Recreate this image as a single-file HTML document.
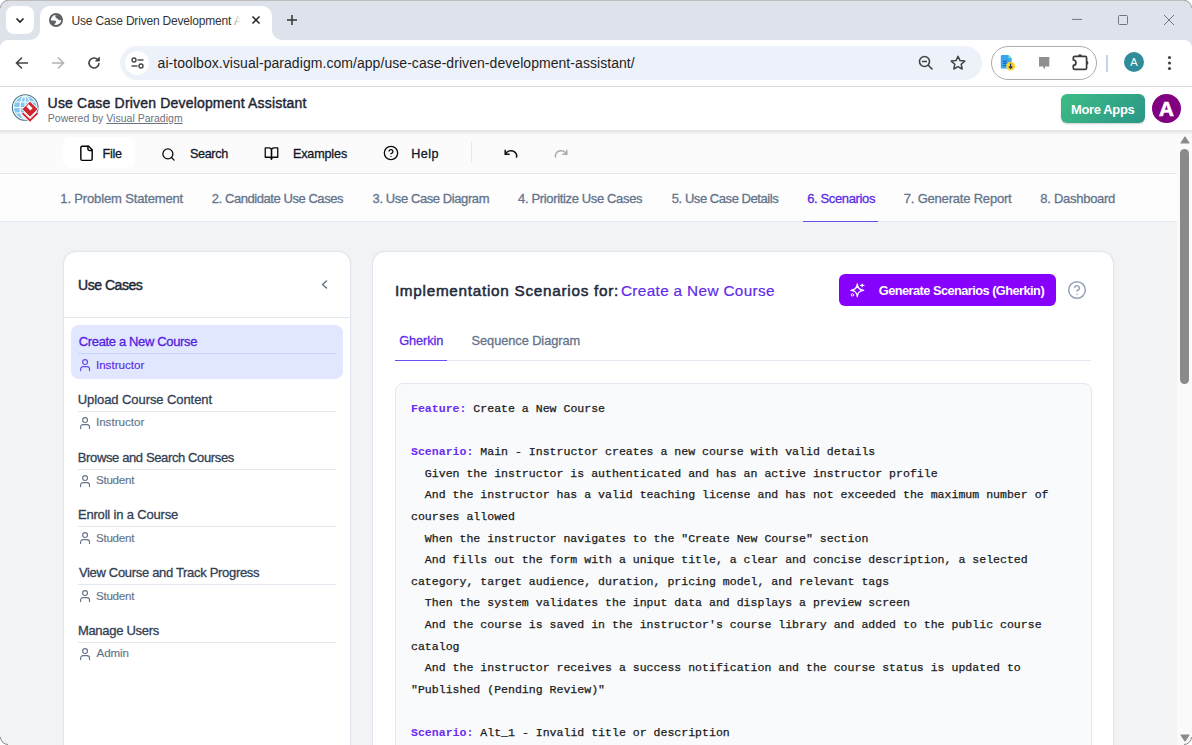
<!DOCTYPE html>
<html><head><meta charset="utf-8">
<style>
*{box-sizing:border-box;margin:0;padding:0}
html,body{width:1192px;height:745px;overflow:hidden;background:#fff}
body{position:relative;font-family:"Liberation Sans",sans-serif;color:#1f2937}
.abs{position:absolute}
svg{position:absolute;overflow:visible}
.t{position:absolute;white-space:pre;line-height:1;font-family:"Liberation Sans",sans-serif}
pre{position:absolute;font-family:"Liberation Mono",monospace;font-size:11.55px;line-height:21.6px;color:#1a1a1a;white-space:pre;-webkit-text-stroke:0.25px #1a1a1a}
.kw{color:#6b2cf5;font-weight:bold;-webkit-text-stroke:0.05px #6b2cf5}
</style></head><body>
<!-- ============ BROWSER CHROME ============ -->
<div class="abs" style="left:0;top:0;width:1192px;height:40px;background:#dee3eb;border-top:1px solid #bdbdbd"></div>
<!-- active tab -->
<div class="abs" style="left:40px;top:6px;width:232px;height:36px;background:#fff;border-radius:10px 10px 0 0"></div>
<div class="abs" style="left:30px;top:30px;width:10px;height:10px;background:#fff"></div>
<div class="abs" style="left:30px;top:30px;width:10px;height:10px;background:#dee3eb;border-radius:0 0 10px 0"></div>
<div class="abs" style="left:272px;top:30px;width:10px;height:10px;background:#fff"></div>
<div class="abs" style="left:272px;top:30px;width:10px;height:10px;background:#dee3eb;border-radius:0 0 0 10px"></div>
<div class="abs" style="left:6px;top:6px;width:28px;height:28px;background:#fff;border-radius:8px"></div>
<svg style="left:14px;top:14px" width="12" height="12" viewBox="0 0 12 12"><path d="M2.5 4.5 6 8 9.5 4.5" fill="none" stroke="#1f1f1f" stroke-width="1.6"/></svg>
<svg style="left:49px;top:12.8px" width="14" height="14" viewBox="0 0 14 14"><circle cx="7" cy="7" r="6.05" fill="#fff" stroke="#5f6368" stroke-width="1.9"/><path d="M6.3 2.2C5.8 3.6 6.9 5 8 5.5 9 6 9.5 7 10.6 7.2 11.9 7.3 12.8 6.6 13 5.6L11.2 1.8z" fill="#5f6368"/><path d="M1 7.4H5.3C6.8 7.4 7.4 8.5 6.9 9.5 6.5 10.3 5.6 10.6 5.3 11.6L5.1 12.8 2.2 11.2z" fill="#5f6368"/></svg>
<div class="t" style="left:234px;top:15.2px;font-size:12px;color:#555">A</div>
<div class="abs" style="left:233px;top:8px;width:14px;height:26px;background:linear-gradient(90deg,rgba(255,255,255,.3),#fff 55%)"></div>
<svg style="left:252px;top:16px" width="8" height="8" viewBox="0 0 8 8"><path d="M.5.5l7 7M7.5.5l-7 7" stroke="#1f1f1f" stroke-width="1.5"/></svg>
<svg style="left:287px;top:15px" width="10" height="10" viewBox="0 0 10 10"><path d="M5 0v10M0 5h10" stroke="#333" stroke-width="1.5"/></svg>
<!-- window controls -->
<svg style="left:1072px;top:14px" width="10" height="10" viewBox="0 0 10 10"><path d="M0 5.4h10" stroke="#72767c" stroke-width="1"/></svg>
<svg style="left:1118px;top:15px" width="10" height="10" viewBox="0 0 10 10"><rect x=".5" y=".5" width="9" height="9" rx="1" fill="none" stroke="#72767c" stroke-width="1"/></svg>
<svg style="left:1164px;top:15px" width="10" height="10" viewBox="0 0 10 10"><path d="M0 0l10 10M10 0L0 10" stroke="#72767c" stroke-width="1"/></svg>

<div class="abs" style="left:0;top:40px;width:1192px;height:47px;background:#fff;border-bottom:1px solid #d8dadd"></div>
<svg style="left:0;top:40px" width="8" height="8" viewBox="0 0 8 8"><path d="M0 0H8A8 8 0 0 0 0 8z" fill="#dee3eb"/></svg>
<svg style="left:1184px;top:40px" width="8" height="8" viewBox="0 0 8 8"><path d="M8 0H0A8 8 0 0 1 8 8z" fill="#dee3eb"/></svg>
<svg style="left:15px;top:56px" width="14" height="14" viewBox="0 0 14 14"><path d="M13 7H2M7 1.5 1.5 7 7 12.5" fill="none" stroke="#444" stroke-width="1.6"/></svg>
<svg style="left:51px;top:56px" width="14" height="14" viewBox="0 0 14 14"><path d="M1 7h11M7 1.5 12.5 7 7 12.5" fill="none" stroke="#b0b3b8" stroke-width="1.6"/></svg>
<svg style="left:87px;top:56px" width="14" height="14" viewBox="0 0 14 14"><path d="M12 7a5 5 0 1 1-1.5-3.6" fill="none" stroke="#444" stroke-width="1.6"/><path d="M12.3 1v4h-4" fill="#444" stroke="#444" stroke-width="1"/></svg>
<div class="abs" style="left:120px;top:46px;width:862px;height:34px;border-radius:17px;background:#edf2fa"></div>
<div class="abs" style="left:125px;top:51px;width:24px;height:24px;border-radius:12px;background:#fff"></div>
<svg style="left:131px;top:57px" width="13" height="12" viewBox="0 0 13 12"><circle cx="3" cy="3" r="2" fill="none" stroke="#444" stroke-width="1.4"/><path d="M6.5 3h6" stroke="#444" stroke-width="1.4"/><circle cx="10" cy="9" r="2" fill="none" stroke="#444" stroke-width="1.4"/><path d="M0.5 9h6" stroke="#444" stroke-width="1.4"/></svg>
<svg style="left:918px;top:55px" width="16" height="16" viewBox="0 0 16 16"><circle cx="6.5" cy="6.5" r="5" fill="none" stroke="#444" stroke-width="1.6"/><path d="M4 6.5h5M10 10l4.5 4.5" stroke="#444" stroke-width="1.6"/></svg>
<svg style="left:950px;top:55px" width="16" height="16" viewBox="0 0 16 16"><path d="M8 1.2l2 4.4 4.8.5-3.6 3.2 1 4.7L8 11.6 3.8 14l1-4.7L1.2 6.1 6 5.6z" fill="none" stroke="#444" stroke-width="1.5" stroke-linejoin="round"/></svg>
<div class="abs" style="left:991px;top:46px;width:106px;height:34px;border-radius:17px;border:1px solid #a8abb0"></div>
<svg style="left:996px;top:50px" width="60" height="26" viewBox="0 0 60 26"><path d="M6 5H12.4L15.6 8.2V17.4a1.2 1.2 0 0 1-1.2 1.2H6a1.2 1.2 0 0 1-1.2-1.2V6.2A1.2 1.2 0 0 1 6 5z" fill="#3aa4ee"/><path d="M12.4 5V8.2H15.6z" fill="#6de3cf"/><path d="M7 11.3h3.8M7 13.4h3.8M7 15.5h3.8" stroke="#1f5a9e" stroke-width=".9"/><circle cx="14.6" cy="16.1" r="4.4" fill="#f8d41e"/><path d="M14.6 13.4V18.2M12.9 16.5l1.7 1.8 1.7-1.8" fill="none" stroke="#1d2a5a" stroke-width="1.1"/><path d="M43 7H53.3V16.6H49.3L48.2 19.6 47.1 16.6H43z" fill="#8f8f8f"/></svg>

<svg style="left:1066px;top:50px" width="30" height="26" viewBox="0 0 30 26"><path d="M8.8 6.3H19.1a1.5 1.5 0 0 1 1.5 1.5V17.9a1.5 1.5 0 0 1-1.5 1.5H8.8a1.5 1.5 0 0 1-1.5-1.5V15.3a2.65 2.65 0 0 0 0-5.3V7.8a1.5 1.5 0 0 1 1.5-1.5z" fill="none" stroke="#3c3c3c" stroke-width="1.7" stroke-linejoin="round"/><path d="M12 6.3a2 2 0 0 1 4 0z" fill="#3c3c3c"/><path d="M20.6 11.1a1.8 1.8 0 0 1 0 3.6z" fill="#3c3c3c"/></svg>
<div class="abs" style="left:1106px;top:55px;width:2px;height:17px;background:#c6d4ef"></div>
<div class="abs" style="left:1124px;top:52px;width:20px;height:20px;border-radius:10px;background:#2e8d99;color:#fff;font-size:11px;text-align:center;line-height:20px">A</div>
<svg style="left:1167px;top:55px" width="5" height="16" viewBox="0 0 5 16"><circle cx="2.5" cy="2.5" r="1.6" fill="#444"/><circle cx="2.5" cy="8" r="1.6" fill="#444"/><circle cx="2.5" cy="13.5" r="1.6" fill="#444"/></svg>

<!-- ============ CONTENT BG ============ -->
<div class="abs" style="left:0;top:130px;width:1177px;height:615px;background:#f2f3f5"></div>
<div class="abs" style="left:0;top:130px;width:1177px;height:44px;background:#fbfbfc;border-bottom:1px solid #e2e8f0"></div>
<div class="abs" style="left:0;top:174px;width:1177px;height:48px;background:#fdfdfe;border-bottom:1px solid #e2e8f0"></div>

<div class="abs" style="left:1177px;top:130px;width:15px;height:615px;background:#fafafa"></div>
<!-- ============ APP HEADER ============ -->
<div class="abs" style="left:0;top:87px;width:1192px;height:43px;background:#fff"></div>
<div class="abs" style="left:0;top:130px;width:1192px;height:2px;background:#e4e5e8"></div>
<div class="abs" style="left:0;top:132px;width:1192px;height:3px;background:linear-gradient(#ececee,rgba(251,251,252,0))"></div>
<svg style="left:12px;top:94px" width="27" height="27" viewBox="0 0 27 27">
  <circle cx="13.2" cy="13.5" r="12.8" fill="#fff" stroke="#4f7585" stroke-width="1.1"/>
  <circle cx="13.2" cy="13.5" r="11.2" fill="#82c8f0"/>
  <path d="M2 13.5h22.4M3.6 8h19.2M3.6 19h19.2M13.2 2.3v22.4" stroke="#fff" stroke-width="1.1"/>
  <ellipse cx="13.2" cy="13.5" rx="5.2" ry="11.2" fill="none" stroke="#fff" stroke-width="1.1"/>
  <path d="M10.5 19.2l7.5 7.3 7.5-7.3" fill="none" stroke="#fff" stroke-width="3.6"/>
  <path d="M10.5 19.2l7.5 7.3 7.5-7.3" fill="none" stroke="#d0242e" stroke-width="1.8"/>
  <path d="M18 7.2l8 8-8 8-8-8z" fill="#d0242e" stroke="#fff" stroke-width="1"/>
  <path d="M16.6 10.2l4 4-2.3 2.3-4-4z" fill="#fff"/>
</svg>
<div class="abs" style="left:1061px;top:94px;width:84px;height:29px;border-radius:6px;background:linear-gradient(135deg,#3dbd84,#2b9688);box-shadow:0 1px 2px rgba(0,0,0,.2)"></div>
<div class="abs" style="left:1152px;top:94px;width:29px;height:29px;border-radius:15px;background:#800080;color:#fff;font-weight:bold;font-size:20.5px;text-align:center;line-height:29px;-webkit-text-stroke:0.7px #fff">A</div>

<!-- ============ MENUBAR ============ -->
<div class="abs" style="left:63px;top:137px;width:72px;height:31px;border-radius:7px;background:#fff"></div>
<svg style="left:77.5px;top:143.5px" width="17" height="18.5" viewBox="0 0 24 24" fill="none" stroke="#000" stroke-width="2" stroke-linecap="round" stroke-linejoin="round"><path d="M15 2H6a2 2 0 0 0-2 2v16a2 2 0 0 0 2 2h12a2 2 0 0 0 2-2V7Z"/><path d="M14 2v4a2 2 0 0 0 2 2h4"/></svg>
<svg style="left:161px;top:146.8px" width="15" height="15" viewBox="0 0 24 24" fill="none" stroke="#0b0b0b" stroke-width="2.1" stroke-linecap="round"><circle cx="11" cy="11" r="8"/><path d="m21 21-4.3-4.3"/></svg>
<svg style="left:264px;top:146px" width="15" height="15" viewBox="0 0 24 24" fill="none" stroke="#0b0b0b" stroke-width="2.1" stroke-linejoin="round"><path d="M2 3h6a4 4 0 0 1 4 4v14a3 3 0 0 0-3-3H2z"/><path d="M22 3h-6a4 4 0 0 0-4 4v14a3 3 0 0 1 3-3h7z"/></svg>
<svg style="left:382.5px;top:145.2px" width="16" height="16" viewBox="0 0 24 24" fill="none" stroke="#0b0b0b" stroke-width="2" stroke-linecap="round"><circle cx="12" cy="12" r="10"/><path d="M9.09 9a3 3 0 0 1 5.83 1c0 2-3 3-3 3"/><path d="M12 17h.01"/></svg>
<div class="abs" style="left:471px;top:141px;width:1px;height:22px;background:#e2e8f0"></div>
<svg style="left:504px;top:148.5px" width="13" height="9" viewBox="0 0 13 9" fill="none" stroke="#111" stroke-width="1.5"><path d="M1.2 .8v4.5h4.5"/><path d="M1.6 5A5.6 5 0 0 1 12.3 8.6"/></svg>
<svg style="left:554.5px;top:148.5px" width="13" height="9" viewBox="0 0 13 9" fill="none" stroke="#a8a8a8" stroke-width="1.4"><path d="M11.8 .8v4.5H7.3"/><path d="M11.4 5A5.6 5 0 0 0 .7 8.6"/></svg>
<!-- steps underline -->
<div class="abs" style="left:803px;top:220.5px;width:75px;height:1.5px;background:#6451f2"></div>

<!-- ============ LEFT CARD ============ -->
<div class="abs" style="left:63px;top:251px;width:288px;height:620px;background:#fff;border:1px solid #e1e6ef;border-radius:13px;box-shadow:0 0 2px rgba(0,0,0,.07)"></div>
<svg style="left:321px;top:280px" width="8" height="10" viewBox="0 0 8 10" fill="none" stroke="#64748b" stroke-width="1.5" stroke-linecap="round" stroke-linejoin="round"><path d="M5.5 1 1.5 4.5l4 3.5"/></svg>
<div class="abs" style="left:64px;top:317px;width:286px;height:1px;background:#e2e8f0"></div>
<div class="abs" style="left:71px;top:325px;width:272px;height:54px;border-radius:8px;background:#e0e7ff"></div>
<div class="abs" style="left:78px;top:353px;width:258px;height:1px;background:#c7d2fe"></div>
<svg style="left:76px;top:357.9px" width="18" height="16" viewBox="0 0 18 16" fill="none" stroke="#6447f0" stroke-width="1.15" stroke-linecap="round"><circle cx="9.06" cy="4.0" r="2.45"/><path d="M4.6 12.6V11.1A2.5 2.5 0 0 1 7.1 8.6H11A2.5 2.5 0 0 1 13.5 11.1V12.6"/></svg>
<div class="abs" style="left:78px;top:411px;width:258px;height:1px;background:#e2e8f0"></div>
<svg style="left:76px;top:415.9px" width="18" height="16" viewBox="0 0 18 16" fill="none" stroke="#64748b" stroke-width="1.15" stroke-linecap="round"><circle cx="9.06" cy="4.0" r="2.45"/><path d="M4.6 12.6V11.1A2.5 2.5 0 0 1 7.1 8.6H11A2.5 2.5 0 0 1 13.5 11.1V12.6"/></svg>
<div class="abs" style="left:78px;top:469px;width:258px;height:1px;background:#e2e8f0"></div>
<svg style="left:76px;top:473.7px" width="18" height="16" viewBox="0 0 18 16" fill="none" stroke="#64748b" stroke-width="1.15" stroke-linecap="round"><circle cx="9.06" cy="4.0" r="2.45"/><path d="M4.6 12.6V11.1A2.5 2.5 0 0 1 7.1 8.6H11A2.5 2.5 0 0 1 13.5 11.1V12.6"/></svg>
<div class="abs" style="left:78px;top:526px;width:258px;height:1px;background:#e2e8f0"></div>
<svg style="left:76px;top:530.8px" width="18" height="16" viewBox="0 0 18 16" fill="none" stroke="#64748b" stroke-width="1.15" stroke-linecap="round"><circle cx="9.06" cy="4.0" r="2.45"/><path d="M4.6 12.6V11.1A2.5 2.5 0 0 1 7.1 8.6H11A2.5 2.5 0 0 1 13.5 11.1V12.6"/></svg>
<div class="abs" style="left:78px;top:584px;width:258px;height:1px;background:#e2e8f0"></div>
<svg style="left:76px;top:588.9px" width="18" height="16" viewBox="0 0 18 16" fill="none" stroke="#64748b" stroke-width="1.15" stroke-linecap="round"><circle cx="9.06" cy="4.0" r="2.45"/><path d="M4.6 12.6V11.1A2.5 2.5 0 0 1 7.1 8.6H11A2.5 2.5 0 0 1 13.5 11.1V12.6"/></svg>
<div class="abs" style="left:78px;top:642px;width:258px;height:1px;background:#e2e8f0"></div>
<svg style="left:76px;top:646.7px" width="18" height="16" viewBox="0 0 18 16" fill="none" stroke="#64748b" stroke-width="1.15" stroke-linecap="round"><circle cx="9.06" cy="4.0" r="2.45"/><path d="M4.6 12.6V11.1A2.5 2.5 0 0 1 7.1 8.6H11A2.5 2.5 0 0 1 13.5 11.1V12.6"/></svg>

<!-- ============ RIGHT CARD ============ -->
<div class="abs" style="left:372px;top:251px;width:742px;height:620px;background:#fff;border:1px solid #e1e6ef;border-radius:13px;box-shadow:0 0 2px rgba(0,0,0,.07)"></div>
<div class="abs" style="left:839px;top:274px;width:217px;height:32px;border-radius:6px;background:#8602fc"></div>
<svg style="left:845px;top:278px" width="26" height="24" viewBox="0 0 26 24" fill="none" stroke="#fff" stroke-linecap="round" stroke-linejoin="round"><path d="M12.3 5.9Q12.7 11.9 18.7 12.3 12.7 12.7 12.3 18.6 11.9 12.7 5.9 12.3 11.9 11.9 12.3 5.9z" stroke-width="1.3"/><path d="M15.5 7.4h3.4M17.2 6.1v2.6" stroke-width="1.2"/><circle cx="7.4" cy="16.9" r="1.2" stroke-width="1"/></svg>
<svg style="left:1067px;top:280px" width="20" height="20" viewBox="0 0 24 24" fill="none" stroke="#94a3b8" stroke-width="1.8" stroke-linecap="round"><circle cx="12" cy="12" r="10"/><path d="M9.09 9a3 3 0 0 1 5.83 1c0 2-3 3-3 3"/><path d="M12 17h.01"/></svg>
<div class="abs" style="left:395px;top:360px;width:696px;height:1px;background:#e2e8f0"></div>
<div class="abs" style="left:395px;top:359.6px;width:52px;height:1.6px;background:#6451f2"></div>
<div class="abs" style="left:395px;top:383px;width:697px;height:600px;border:1px solid #e2e8f0;border-radius:8px;background:#f8fafc"></div>
<pre style="left:411px;top:398.1px"><span class="kw">Feature:</span> Create a New Course

<span class="kw">Scenario:</span> Main - Instructor creates a new course with valid details
  Given the instructor is authenticated and has an active instructor profile
  And the instructor has a valid teaching license and has not exceeded the maximum number of
courses allowed
  When the instructor navigates to the "Create New Course" section
  And fills out the form with a unique title, a clear and concise description, a selected
category, target audience, duration, pricing model, and relevant tags
  Then the system validates the input data and displays a preview screen
  And the course is saved in the instructor's course library and added to the public course
catalog
  And the instructor receives a success notification and the course status is updated to
"Published (Pending Review)"

<span class="kw">Scenario:</span> Alt_1 - Invalid title or description
  Given the instructor is authenticated</pre>

<!-- ============ SCROLLBAR ============ -->
<svg style="left:1179.5px;top:135.5px" width="10" height="8" viewBox="0 0 10 8"><path d="M5 1 9 7H1z" fill="#8a8a8a" stroke="#8a8a8a" stroke-width="1.2" stroke-linejoin="round"/></svg>
<div class="abs" style="left:1180px;top:149px;width:9px;height:235px;border-radius:4.5px;background:#8a8a8a"></div>
<svg style="left:1179.5px;top:733.5px" width="10" height="8" viewBox="0 0 10 8"><path d="M1 1H9L5 7z" fill="#8a8a8a" stroke="#8a8a8a" stroke-width="1.2" stroke-linejoin="round"/></svg>

<!-- window corners -->
<svg style="left:0;top:0" width="8" height="8" viewBox="0 0 8 8"><path d="M0 0H8A8 8 0 0 0 0 8z" fill="#fff"/><path d="M8 .5A7.5 7.5 0 0 0 .5 8" fill="none" stroke="#a8a8a8" stroke-width="1"/></svg>
<svg style="left:1184px;top:0" width="8" height="8" viewBox="0 0 8 8"><path d="M8 0H0A8 8 0 0 1 8 8z" fill="#fff"/><path d="M0 .5A7.5 7.5 0 0 1 7.5 8" fill="none" stroke="#a8a8a8" stroke-width="1"/></svg>
<svg style="left:0;top:737px" width="8" height="8" viewBox="0 0 8 8"><path d="M0 8H8A8 8 0 0 1 0 0z" fill="#fff"/><path d="M8 7.5A7.5 7.5 0 0 1 .5 0" fill="none" stroke="#8a8a8a" stroke-width="1"/></svg>
<svg style="left:1184px;top:737px" width="8" height="8" viewBox="0 0 8 8"><path d="M8 8H0A8 8 0 0 0 8 0z" fill="#fff"/><path d="M0 7.5A7.5 7.5 0 0 0 7.5 0" fill="none" stroke="#8a8a8a" stroke-width="1"/></svg>

<div class="t" style="left:71.60px;top:15.24px;font-size:12px;letter-spacing:-0.193px;color:#333;">Use Case Driven Development</div>
<div class="t" style="left:157.60px;top:55.75px;font-size:14px;letter-spacing:0.055px;color:#1f1f1f;">ai-toolbox.visual-paradigm.com/app/use-case-driven-development-assistant/</div>
<div class="t" style="left:47.60px;top:95.95px;font-size:14px;letter-spacing:0.183px;color:#1e2433;-webkit-text-stroke:0.4px currentColor;">Use Case Driven Development Assistant</div>
<div class="t" style="left:47.80px;top:112.71px;font-size:10.5px;letter-spacing:0.008px;color:#6b7280;">Powered by <span style="text-decoration:underline">Visual Paradigm</span></div>
<div class="t" style="left:1071.00px;top:102.89px;font-size:13px;letter-spacing:-0.374px;font-weight:bold;color:#fff;">More Apps</div>
<div class="t" style="left:102.60px;top:147.63px;font-size:12.6px;letter-spacing:-0.334px;color:#111827;-webkit-text-stroke:0.3px currentColor;">File</div>
<div class="t" style="left:189.90px;top:147.63px;font-size:12.6px;letter-spacing:-0.32px;color:#111827;-webkit-text-stroke:0.3px currentColor;">Search</div>
<div class="t" style="left:292.90px;top:147.63px;font-size:12.6px;letter-spacing:-0.143px;color:#111827;-webkit-text-stroke:0.3px currentColor;">Examples</div>
<div class="t" style="left:411.20px;top:147.63px;font-size:12.6px;letter-spacing:0.466px;color:#111827;-webkit-text-stroke:0.3px currentColor;">Help</div>
<div class="t" style="left:60.30px;top:192.49px;font-size:13px;letter-spacing:-0.148px;color:#64748b;-webkit-text-stroke:0.3px currentColor;">1. Problem Statement</div>
<div class="t" style="left:211.80px;top:192.49px;font-size:13px;letter-spacing:-0.438px;color:#64748b;-webkit-text-stroke:0.3px currentColor;">2. Candidate Use Cases</div>
<div class="t" style="left:372.60px;top:192.49px;font-size:13px;letter-spacing:-0.411px;color:#64748b;-webkit-text-stroke:0.3px currentColor;">3. Use Case Diagram</div>
<div class="t" style="left:518.10px;top:192.49px;font-size:13px;letter-spacing:-0.354px;color:#64748b;-webkit-text-stroke:0.3px currentColor;">4. Prioritize Use Cases</div>
<div class="t" style="left:671.80px;top:192.49px;font-size:13px;letter-spacing:-0.444px;color:#64748b;-webkit-text-stroke:0.3px currentColor;">5. Use Case Details</div>
<div class="t" style="left:807.20px;top:192.49px;font-size:13px;letter-spacing:-0.364px;color:#5b2bea;-webkit-text-stroke:0.3px currentColor;">6. Scenarios</div>
<div class="t" style="left:903.80px;top:192.49px;font-size:13px;letter-spacing:-0.2px;color:#64748b;-webkit-text-stroke:0.3px currentColor;">7. Generate Report</div>
<div class="t" style="left:1040.30px;top:192.49px;font-size:13px;letter-spacing:-0.273px;color:#64748b;-webkit-text-stroke:0.3px currentColor;">8. Dashboard</div>
<div class="t" style="left:78.10px;top:278.05px;font-size:14px;letter-spacing:-0.476px;color:#1e293b;-webkit-text-stroke:0.45px currentColor;">Use Cases</div>
<div class="t" style="left:78.80px;top:334.89px;font-size:13px;letter-spacing:-0.355px;color:#5521dd;-webkit-text-stroke:0.3px currentColor;">Create a New Course</div>
<div class="t" style="left:95.90px;top:359.18px;font-size:11.6px;letter-spacing:0.022px;color:#5d2ae8;-webkit-text-stroke:0.15px currentColor;">Instructor</div>
<div class="t" style="left:77.80px;top:392.89px;font-size:13px;letter-spacing:-0.08px;color:#334155;-webkit-text-stroke:0.3px currentColor;">Upload Course Content</div>
<div class="t" style="left:95.90px;top:415.98px;font-size:11.6px;letter-spacing:0.022px;color:#64748b;-webkit-text-stroke:0.15px currentColor;">Instructor</div>
<div class="t" style="left:77.80px;top:450.69px;font-size:13px;letter-spacing:-0.375px;color:#334155;-webkit-text-stroke:0.3px currentColor;">Browse and Search Courses</div>
<div class="t" style="left:95.90px;top:474.08px;font-size:11.6px;letter-spacing:-0.233px;color:#64748b;-webkit-text-stroke:0.15px currentColor;">Student</div>
<div class="t" style="left:77.90px;top:507.79px;font-size:13px;letter-spacing:-0.176px;color:#334155;-webkit-text-stroke:0.3px currentColor;">Enroll in a Course</div>
<div class="t" style="left:95.90px;top:532.28px;font-size:11.6px;letter-spacing:-0.233px;color:#64748b;-webkit-text-stroke:0.15px currentColor;">Student</div>
<div class="t" style="left:78.90px;top:565.89px;font-size:13px;letter-spacing:-0.317px;color:#334155;-webkit-text-stroke:0.3px currentColor;">View Course and Track Progress</div>
<div class="t" style="left:95.90px;top:590.28px;font-size:11.6px;letter-spacing:-0.233px;color:#64748b;-webkit-text-stroke:0.15px currentColor;">Student</div>
<div class="t" style="left:77.90px;top:623.69px;font-size:13px;letter-spacing:-0.291px;color:#334155;-webkit-text-stroke:0.3px currentColor;">Manage Users</div>
<div class="t" style="left:96.60px;top:647.48px;font-size:11.6px;letter-spacing:-0.15px;color:#64748b;-webkit-text-stroke:0.15px currentColor;">Admin</div>
<div class="t" style="left:394.90px;top:283.45px;font-size:15.3px;letter-spacing:0.722px;color:#1e293b;-webkit-text-stroke:0.5px currentColor;">Implementation Scenarios for:</div>
<div class="t" style="left:620.90px;top:283.45px;font-size:15.3px;letter-spacing:0.367px;color:#5f2ae9;-webkit-text-stroke:0.2px currentColor;">Create a New Course</div>
<div class="t" style="left:878.80px;top:284.76px;font-size:12.8px;letter-spacing:-0.548px;font-weight:bold;color:#fff;">Generate Scenarios (Gherkin)</div>
<div class="t" style="left:399.20px;top:334.66px;font-size:12.8px;letter-spacing:-0.1px;color:#5b2bea;-webkit-text-stroke:0.3px currentColor;">Gherkin</div>
<div class="t" style="left:471.60px;top:334.66px;font-size:12.8px;letter-spacing:-0.067px;color:#64748b;-webkit-text-stroke:0.3px currentColor;">Sequence Diagram</div>
</body></html>
